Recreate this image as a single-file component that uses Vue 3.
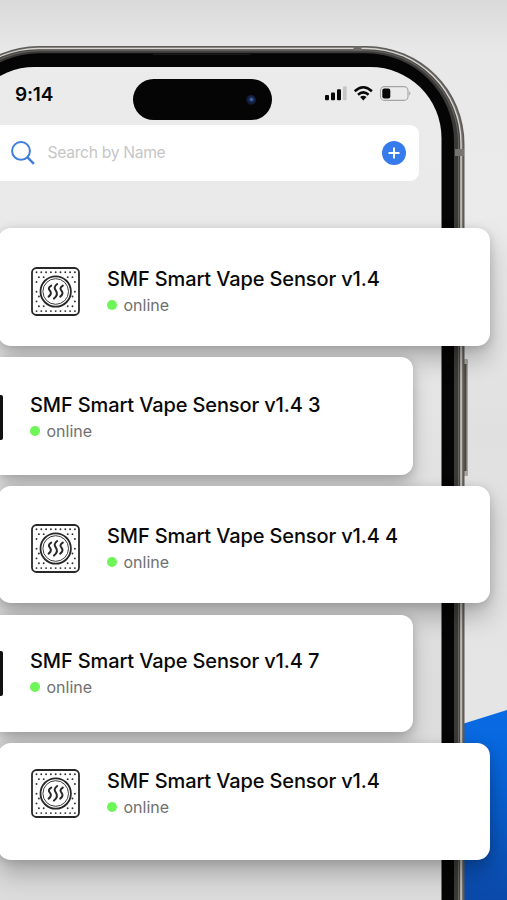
<script setup>
const devices = [
  { name: 'SMF Smart Vape Sensor v1.4', shape: 'wide first' },
  { name: 'SMF Smart Vape Sensor v1.4 3', shape: 'inset' },
  { name: 'SMF Smart Vape Sensor v1.4 4', shape: 'wide third' },
  { name: 'SMF Smart Vape Sensor v1.4 7', shape: 'inset fourth' },
  { name: 'SMF Smart Vape Sensor v1.4', shape: 'wide last' },
]

// Perforations of the sensor cover, skipping the round vent in the middle.
const dots = []
for (let row = 0; row < 9; row++) {
  for (let col = 0; col < 9; col++) {
    const x = 5.5 + col * 4.8 + (row % 2 ? 2.4 : 0)
    const y = 5.3 + row * 4.85
    if (x < 45.5 && Math.hypot(x - 24.7, y - 24.5) > 17.5) dots.push({ x, y })
  }
}
</script>

<template>
  <main class="scene">
    <svg class="phone" viewBox="0 0 507 900" aria-hidden="true">
      <defs>
        <linearGradient id="blue" x1="0" y1="0" x2="0" y2="1">
          <stop offset="0" stop-color="#086be4" />
          <stop offset=".35" stop-color="#0864d8" />
          <stop offset="1" stop-color="#0b49a9" />
        </linearGradient>
        <linearGradient id="screen" x1="0" y1="0" x2="0" y2="1">
          <stop offset="0" stop-color="#ebebeb" />
          <stop offset=".2" stop-color="#e9e9e9" />
          <stop offset=".5" stop-color="#dedede" />
          <stop offset="1" stop-color="#dadada" />
        </linearGradient>
      </defs>
      <path d="M440 731L507 710V900H440Z" fill="url(#blue)" />
      <rect x="460" y="359" width="8" height="117" rx="1" fill="#aaa69f" />
      <rect x="463" y="364" width="3.5" height="107" fill="#4b4945" />
      <rect x="-59.5" y="46" width="524" height="1050" rx="98" fill="#5c5b59" />
      <rect x="-58" y="47.3" width="521" height="1048" rx="96.5" fill="#77736d" />
      <rect x="-56.8" y="47.8" width="518.5" height="1048" rx="95.5" fill="#d8d7d3" />
      <rect x="-56" y="49.2" width="516.3" height="1048" rx="94" fill="#484744" />
      <rect x="-54" y="50.2" width="513" height="1048" rx="93" fill="#65635f" />
      <rect x="-53" y="51.2" width="511" height="1048" rx="92" fill="#3b3a38" />
      <rect x="-49" y="53.2" width="503" height="1048" rx="88" fill="#050505" />
      <rect x="-36.5" y="67" width="478" height="1040" rx="71" fill="url(#screen)" />
      <rect x="353.5" y="46" width="8" height="4.5" fill="#6d6b68" />
      <rect x="455" y="149" width="9" height="7" fill="#777571" />
      <path d="M153 54.3H250" stroke="#202020" stroke-width="1" />
    </svg>

    <header class="status">
      <span class="time">9:14</span>
      <span class="island"><i class="lens"></i></span>
      <svg class="indicators" width="88" height="18" viewBox="0 0 88 18">
        <g fill="#080808">
          <rect x="1" y="10" width="4" height="5.3" rx="1" />
          <rect x="7" y="7.4" width="4" height="7.9" rx="1" />
          <rect x="13" y="4.3" width="4" height="11" rx="1" />
          <rect x="19" y="1.3" width="3.6" height="14" rx="1" fill="#c5c5c5" />
        </g>
        <g fill="none" stroke="#080808" stroke-width="2.5">
          <path d="M30.7 6.2Q39.3 -1.6 47.9 6.2" />
          <path d="M34 9.8Q39.3 5 44.6 9.8" />
        </g>
        <path d="M36.1 12Q39.3 9.4 42.5 12L39.3 15.4Z" fill="#080808" />
        <rect x="56.5" y="1.6" width="27.5" height="13.8" rx="4" fill="none" stroke="#a4a4a4" stroke-width="1.1" />
        <rect x="58.3" y="3.4" width="8" height="10.2" rx="2" fill="#050505" />
        <path d="M85.2 6.2Q87.7 8.3 85.2 10.4Z" fill="#a4a4a4" />
      </svg>
    </header>

    <section class="search">
      <svg class="magnifier" width="26" height="26" viewBox="0 0 26 26" fill="none" stroke="#3f7edb" stroke-width="2">
        <circle cx="11" cy="10.9" r="8.9" />
        <path d="M17.3 17.2L23.9 23.8" stroke-width="2.4" />
      </svg>
      <span class="placeholder">Search by Name</span>
      <svg class="add" width="24" height="24" viewBox="0 0 24 24">
        <circle cx="12" cy="12" r="12" fill="#367bec" />
        <path d="M12 6.5V17.5M6.5 12H17.5" stroke="#fff" stroke-width="1.9" />
      </svg>
    </section>

    <section class="list">
      <article v-for="(device, i) in devices" :key="i" class="card" :class="device.shape">
        <svg v-if="device.shape.startsWith('wide')" class="sensor" width="49" height="49" viewBox="0 0 49 49">
          <rect x="1" y="1" width="47" height="47" rx="4.5" fill="#fff" stroke="#272727" stroke-width="1.8" />
          <circle v-for="(dot, n) in dots" :key="n" :cx="dot.x" :cy="dot.y" r=".95" fill="#303030" />
          <g fill="none" stroke="#272727">
            <circle cx="24.7" cy="24.5" r="15.2" stroke-width="1.8" />
            <circle cx="24.7" cy="24.5" r="12.8" stroke-width=".9" />
            <g stroke-width="2" stroke-linecap="round" stroke-linejoin="round">
              <path d="M20.2 18.6C17 20.6 17.6 22.2 19 23.8S20.4 27.5 17.6 29.6" />
              <path d="M26.2 17C22.6 19.6 23.4 21.6 25 23.8S26.4 28.6 23 31.6" />
              <path d="M31.8 18.6C28.6 20.6 29.2 22.2 30.6 23.8S32 27.5 29.2 29.6" />
            </g>
          </g>
        </svg>
        <span v-else class="sensor-edge"></span>
        <div class="details">
          <h2>{{ device.name }}</h2>
          <p><i class="dot"></i>online</p>
        </div>
      </article>
    </section>
  </main>
</template>

<style>
body { margin: 0; overflow: hidden; }
</style>

<style scoped>
.scene {
  position: relative;
  width: 507px;
  height: 900px;
  overflow: hidden;
  box-sizing: border-box;
  padding-top: 67px;
  background: linear-gradient(#dadada 0, #e8e8e8 52px, #ebebeb 200px, #e0e0e0 430px, #e5e5e5 700px);
  font-family: Inter, "Liberation Sans", sans-serif;
}
.phone { position: absolute; inset: 0; width: 507px; height: 900px; }
.status, .search, .list { position: relative; }
.status { display: flex; align-items: flex-start; height: 58px; }
.time { width: 118px; padding: 15px 0 0 15px; font-size: 19px; line-height: 25px; font-weight: 600; letter-spacing: -.2px; color: #080808; }
.island { width: 139px; height: 41px; margin-top: 12px; border-radius: 21px; background: #050505; display: flex; align-items: center; justify-content: flex-end; }
.lens { width: 10px; height: 10px; margin-right: 16px; border-radius: 50%; background: radial-gradient(circle at 55% 45%, #4262a2 0 13%, #17284f 30%, #101a36 60%, #080a10 75%); }
.indicators { margin: 18px 0 0 52px; }
.search { display: flex; align-items: center; box-sizing: border-box; width: 419px; height: 56px; padding: 0 13px 0 10px; background: #fff; border-radius: 0 9px 9px 0; }
.placeholder { flex: 1; margin-left: 11.5px; font-size: 15.7px; line-height: 20px; letter-spacing: -.33px; color: #c6c6c6; }
.list { display: flex; flex-direction: column; align-items: flex-start; gap: 11px; margin-top: 47px; }
.card { display: flex; align-items: flex-start; box-sizing: border-box; height: 117.5px; background: #fff; }
.wide { width: 492px; margin-left: -2px; padding: 39px 0 0 33px; border-radius: 13px; box-shadow: 0 14px 24px rgba(0, 0, 0, .24), 0 2px 10px rgba(0, 0, 0, .14); }
.inset { width: 413px; height: 118px; padding-top: 36px; border-radius: 0 12px 12px 0; box-shadow: 0 12px 20px rgba(0, 0, 0, .2), 0 2px 9px rgba(0, 0, 0, .15); }
.third { height: 117px; margin-top: .5px; padding-top: 38px; }
.fourth { height: 117px; padding-top: 34.5px; margin-top: .5px; }
.last { padding-top: 26.8px; }
.sensor { flex: none; }
.sensor-edge { width: 3px; height: 45px; margin-top: 2px; background: #111; border-radius: 0 2px 2px 0; }
.details { margin-left: 27px; white-space: nowrap; }
h2 { margin: 0; font-size: 20px; line-height: 24px; font-weight: 500; letter-spacing: -.13px; color: #090909; }
p { display: flex; align-items: center; gap: 6.5px; margin: 4px 0 0; font-size: 16px; line-height: 20px; color: #707070; }
.dot { width: 10px; height: 10px; border-radius: 50%; background: #6ef558; }
</style>
